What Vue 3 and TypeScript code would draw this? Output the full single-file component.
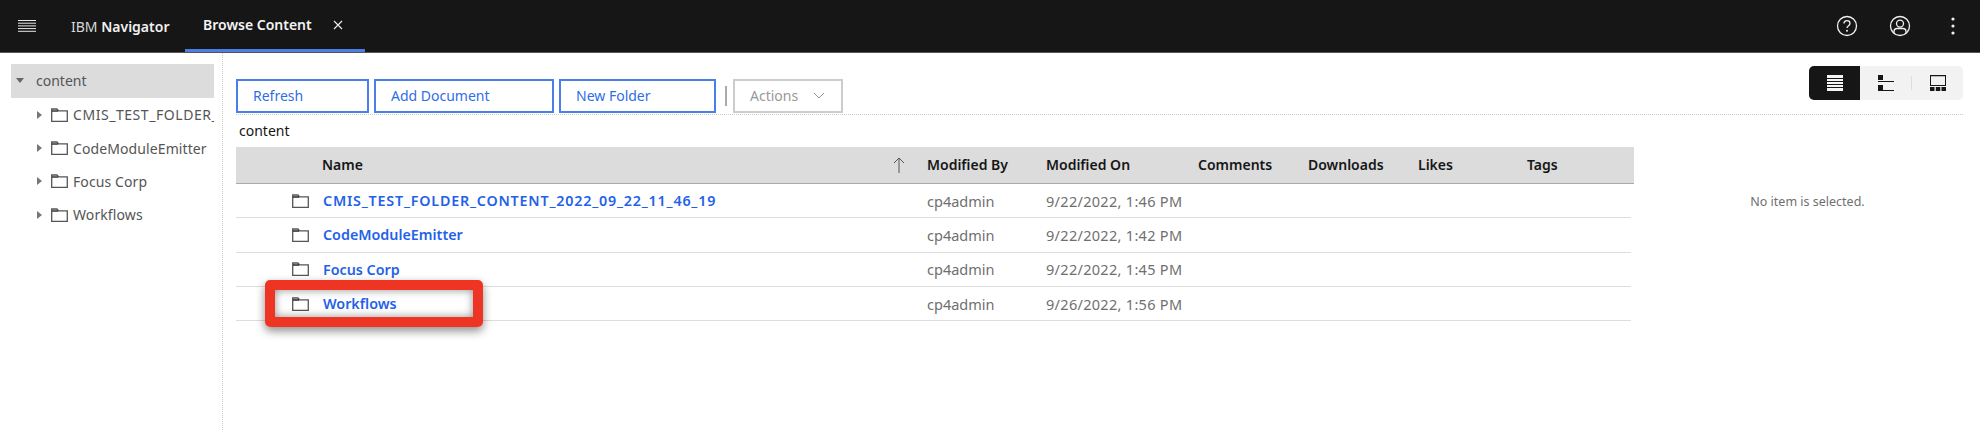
<script setup lang="ts">
const tree: string[] = ['CMIS_TEST_FOLDER_CONTENT_2022_09_22_11_46_19', 'CodeModuleEmitter', 'Focus Corp', 'Workflows']
const rows = [
  { name: 'CMIS_TEST_FOLDER_CONTENT_2022_09_22_11_46_19', by: 'cp4admin', on: '9/22/2022, 1:46 PM' },
  { name: 'CodeModuleEmitter', by: 'cp4admin', on: '9/22/2022, 1:42 PM' },
  { name: 'Focus Corp', by: 'cp4admin', on: '9/22/2022, 1:45 PM' },
  { name: 'Workflows', by: 'cp4admin', on: '9/26/2022, 1:56 PM' },
]
const extraCols: string[] = ['Comments', 'Downloads', 'Likes', 'Tags']
const isLong = (s: string): boolean => s.length > 30
</script>

<template>
  <div class="page">
    <header class="top">
      <svg class="burger" width="18" height="12" viewBox="0 0 18 12"><path d="M0 .5h18M0 3.2h18M0 5.9h18M0 8.6h18M0 11.3h18" stroke="#e8e8e8" stroke-width="1" fill="none" /></svg>
      <div class="brand">IBM <b>Navigator</b></div>
      <div class="tab">
        <span class="tab-label">Browse Content</span>
        <svg width="10" height="10" viewBox="0 0 10 10"><path d="M1 1l8 8M9 1l-8 8" stroke="#f0f0f0" stroke-width="1.1" fill="none" /></svg>
      </div>
      <div class="top-icons">
        <svg width="22" height="22" viewBox="0 0 22 22" fill="none"><circle cx="11" cy="11" r="9.5" stroke="#f0f0f0" stroke-width="1.3" /><path d="M8 8.6c0-1.8 1.4-3 3-3s3 1.1 3 2.8c0 2.3-3 2.3-3 4.6" stroke="#f0f0f0" stroke-width="1.3" /><circle cx="11" cy="15.8" r="1" fill="#f0f0f0" /></svg>
        <svg width="22" height="22" viewBox="0 0 22 22" fill="none"><circle cx="11" cy="11" r="9.5" stroke="#f0f0f0" stroke-width="1.3" /><circle cx="11" cy="8.6" r="3.5" stroke="#f0f0f0" stroke-width="1.3" /><path d="M5 18v-1.5c0-1.8 1.4-3 3-3h6c1.6 0 3 1.2 3 3V18" stroke="#f0f0f0" stroke-width="1.3" /></svg>
        <svg class="kebab" width="4" height="18" viewBox="0 0 4 18"><circle cx="2" cy="2" r="1.6" fill="#f0f0f0" /><circle cx="2" cy="9" r="1.6" fill="#f0f0f0" /><circle cx="2" cy="16" r="1.6" fill="#f0f0f0" /></svg>
      </div>
    </header>

    <div class="body">
      <aside class="side">
        <div class="tree-root">
          <svg width="8" height="5" viewBox="0 0 8 5"><path d="M0 0h8L4 5z" fill="#666" /></svg>
          <span>content</span>
        </div>
        <div v-for="t in tree" :key="t" class="tree-item">
          <svg class="caret" width="5" height="8" viewBox="0 0 5 8"><path d="M0 0l5 4-5 4z" fill="#777" /></svg>
          <svg class="folder" width="17" height="14" viewBox="0 0 17 14" fill="none"><path d="M.7 13.3V1h5.2l1.6 1.8h8.8v10.5z" stroke="#555" stroke-width="1.3" /><path d="M1 3h6" stroke="#333" stroke-width="1.5" /></svg>
          <span class="tree-label" :class="{ spaced: isLong(t) }">{{ t }}</span>
        </div>
      </aside>

      <main class="main">
        <div class="bar">
          <div class="actions">
            <button class="btn w1">Refresh</button>
            <button class="btn w2">Add Document</button>
            <button class="btn w3">New Folder</button>
            <i class="sep"></i>
            <button class="btn-off">
              <span>Actions</span>
              <svg width="12" height="7" viewBox="0 0 12 7" fill="none"><path d="M1 1l5 5 5-5" stroke="#999" stroke-width="1" /></svg>
            </button>
          </div>
          <div class="views">
            <div class="view on">
              <svg width="16" height="16" viewBox="0 0 16 16"><rect width="16" height="16" fill="#f4f4f4" /><path d="M0 3.5h16M0 6.5h16M0 9.5h16M0 12.5h16" stroke="#161616" stroke-width="1" /></svg>
            </div>
            <div class="view">
              <svg width="16" height="16" viewBox="0 0 16 16"><rect width="5" height="5" fill="#161616" /><rect y="10" width="5" height="5" fill="#161616" /><path d="M0 6.5h16M0 15.5h16" stroke="#161616" stroke-width="1" /></svg>
            </div>
            <i class="view-sep"></i>
            <div class="view">
              <svg width="16" height="16" viewBox="0 0 16 16" fill="none"><rect x=".5" y=".5" width="15" height="10" stroke="#161616" /><path d="M0 .5h16" stroke="#161616" stroke-width="1.4" /><path d="M0 12h4.5v4H0zM5.8 12h4.5v4H5.8zM11.5 12H16v4h-4.5z" fill="#161616" /></svg>
            </div>
          </div>
        </div>

        <div class="panes">
          <section class="listing">
            <div class="crumb">content</div>
            <div class="head grid">
              <span></span>
              <span>Name</span>
              <svg class="sort" width="12" height="16" viewBox="0 0 12 16" fill="none"><path d="M6 16V1M1 6l5-5 5 5" stroke="#555" stroke-width="1" /></svg>
              <span>Modified By</span>
              <span>Modified On</span>
              <span v-for="c in extraCols" :key="c">{{ c }}</span>
            </div>
            <div v-for="r in rows" :key="r.name" class="row grid">
              <svg class="folder row-folder" width="17" height="14" viewBox="0 0 17 14" fill="none"><path d="M.7 13.3V1h5.2l1.6 1.8h8.8v10.5z" stroke="#555" stroke-width="1.3" /><path d="M1 3h6" stroke="#222" stroke-width="1.5" /></svg>
              <a class="link" :class="{ spaced: isLong(r.name) }">{{ r.name }}</a>
              <span></span>
              <span class="cell">{{ r.by }}</span>
              <span class="cell date">{{ r.on }}</span>
            </div>
          </section>
          <aside class="detail">No item is selected.</aside>
        </div>
      </main>
    </div>

    <div class="callout"></div>
  </div>
</template>

<style>
html, body { margin: 0; background: #fff; }
</style>

<style scoped>
.page {
  position: relative;
  width: 1980px;
  height: 430px;
  overflow: hidden;
  background: #fff;
  font-family: "Noto Sans", "Liberation Sans", sans-serif;
  font-size: 14px;
  color: #161616;
}
.top {
  height: 52px;
  box-sizing: content-box;
  display: flex;
  align-items: center;
  background: #161616;
  border-bottom: 1px solid #555;
  color: #f4f4f4;
}
.burger { margin-left: 18px; flex: none; }
.brand { margin-left: 35px; width: 114px; font-size: 14px; color: #d8d8d8; white-space: nowrap; }
.brand b { font-weight: 600; color: #f0f0f0; }
.tab {
  height: 52px;
  width: 180px;
  box-sizing: border-box;
  display: flex;
  align-items: center;
  padding-left: 18px;
  border-bottom: 3px solid #4a7ee0;
}
.tab-label { font-weight: 600; width: 130px; white-space: nowrap; }
.top-icons {
  margin-left: auto;
  display: flex;
  align-items: center;
  gap: 31px;
  padding-right: 25px;
}
.kebab { margin-left: 9px; }
.body { display: flex; height: 377px; }
.side {
  width: 223px;
  flex: none;
  box-sizing: border-box;
  padding: 11px 8px 0 11px;
  border-right: 1px dotted #ccc;
  color: #555;
}
.tree-root {
  height: 34px;
  box-sizing: border-box;
  padding: 0 0 2px 5px;
  display: flex;
  align-items: center;
  gap: 12px;
  background: #dcdcdc;
}
.tree-item {
  height: 33.4px;
  box-sizing: border-box;
  padding: 0 0 0 26px;
  display: flex;
  align-items: center;
  overflow: hidden;
}
.caret { flex: none; }
.folder { flex: none; }
.tree-item .folder { margin-left: 9px; margin-right: 5px; }
.tree-label { white-space: nowrap; letter-spacing: .1px; }
.tree-label.spaced { letter-spacing: .55px; }
.main { flex: 1; padding-left: 13px; padding-right: 17px; min-width: 0; }
.bar {
  height: 62px;
  box-sizing: border-box;
  border-bottom: 1px dotted #ccc;
  display: flex;
  justify-content: space-between;
  padding-top: 13px;
}
.actions { display: flex; align-items: flex-start; margin-top: 13px; gap: 5px; }
.btn, .btn-off {
  height: 34px;
  box-sizing: border-box;
  background: #fff;
  font: inherit;
  text-align: left;
  padding: 0 0 2px 15px;
}
.btn { border: 2px solid #4a7ee8; color: #2f6de8; }
.w1 { width: 133px; }
.w2 { width: 180px; }
.w3 { width: 157px; }
.sep { width: 2px; height: 20px; background: #aaa; margin: 7px 1px 0 4px; }
.btn-off {
  width: 110px;
  border: 2px solid #ccc;
  color: #999;
  display: flex;
  align-items: center;
  justify-content: space-between;
  padding-right: 16px;
}
.views {
  display: flex;
  align-items: center;
  width: 154px;
  height: 34px;
  background: #f2f2f2;
  border-radius: 5px;
  overflow: hidden;
}
.view { width: 51px; height: 34px; display: flex; align-items: center; justify-content: center; flex: none; }
.view.on { background: #161616; }
.view-sep { width: 1px; height: 14px; background: #ddd; flex: none; }
.panes { display: flex; }
.listing { width: 1398px; flex: none; }
.crumb { height: 32px; line-height: 32px; padding-left: 3px; }
.grid {
  display: grid;
  grid-template-columns: 86px 559px 46px 119px 152px 110px 110px 109px 1fr;
  align-items: center;
}
.head {
  height: 36px;
  box-sizing: content-box;
  background: #dcdcdc;
  border-bottom: 1px solid #aaa;
  font-weight: 600;
  font-size: 14px;
  white-space: nowrap;
}
.head span { display: block; margin-top: -2px; }
.sort { margin-left: 12px; }
.row {
  height: 34.3px;
  box-sizing: border-box;
  border-bottom: 1px solid #ddd;
  width: 1395px;
}
.row-folder { justify-self: end; margin-right: 13px; }
.link { color: #1f62e8; font-weight: 600; white-space: nowrap; font-size: 14.3px; padding-left: 1px; }
.link.spaced { letter-spacing: .8px; }
.cell { color: #6f6f6f; white-space: nowrap; font-size: 14.5px; }
.date { letter-spacing: .3px; }
.detail {
  flex: 1;
  padding-top: 78px;
  padding-left: 18px;
  text-align: center;
  font-size: 12.5px;
  color: #6f6f6f;
}
.callout {
  position: absolute;
  left: 265px;
  top: 280px;
  width: 218px;
  height: 47px;
  box-sizing: border-box;
  border: 10px solid #ee3524;
  border-radius: 5px;
  box-shadow: 0 4px 10px rgba(0, 0, 0, .45), inset 0 0 8px rgba(0, 0, 0, .45);
}
</style>
